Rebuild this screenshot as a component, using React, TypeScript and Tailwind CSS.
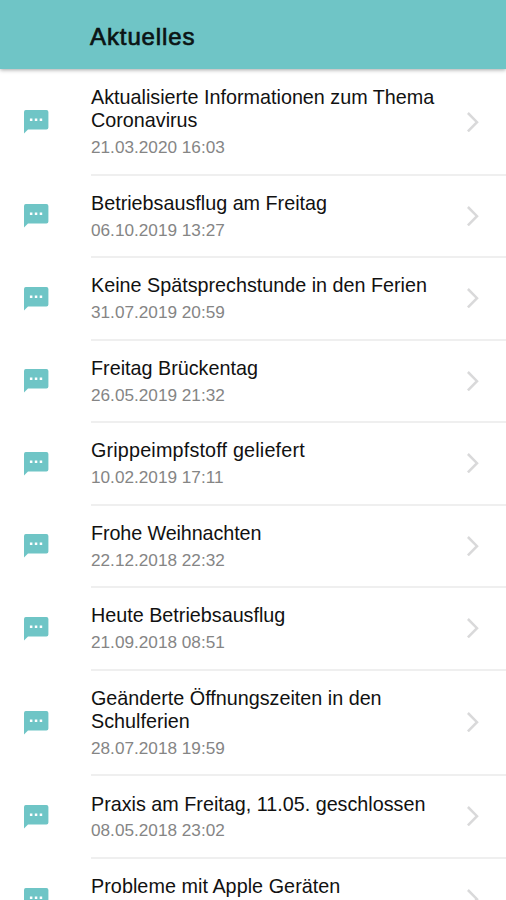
import React from "react";

type Item = { lines: string[]; date?: string; tracking?: string };

const items: Item[] = [
  { lines: ["Aktualisierte Informationen zum Thema", "Coronavirus"], date: "21.03.2020 16:03" },
  { lines: ["Betriebsausflug am Freitag"], date: "06.10.2019 13:27" },
  { lines: ["Keine Spätsprechstunde in den Ferien"], date: "31.07.2019 20:59" },
  { lines: ["Freitag Brückentag"], date: "26.05.2019 21:32" },
  { lines: ["Grippeimpfstoff geliefert"], date: "10.02.2019 17:11", tracking: "tracking-[0.18px]" },
  { lines: ["Frohe Weihnachten"], date: "22.12.2018 22:32", tracking: "tracking-[-0.1px]" },
  { lines: ["Heute Betriebsausflug"], date: "21.09.2018 08:51" },
  { lines: ["Geänderte Öffnungszeiten in den", "Schulferien"], date: "28.07.2018 19:59" },
  { lines: ["Praxis am Freitag, 11.05. geschlossen"], date: "08.05.2018 23:02" },
  { lines: ["Probleme mit Apple Geräten"], tracking: "tracking-[0.05px]" },
];

function MessageIcon() {
  return (
    <svg className="block h-6 w-[25px]" viewBox="0 0 25 24">
      <path fill="#6fc5c6" d="M1.8 0H22.4A2 2 0 0 1 24.4 2V17.4A2 2 0 0 1 22.4 19.4H4L0 23.4V2A2 2 0 0 1 1.8 0Z" />
      <path fill="#fff" d="M5.9 8.4h2.5v2.5H5.9zM10.8 8.4h2.5v2.5h-2.5zM15.7 8.4h2.5v2.5h-2.5z" />
    </svg>
  );
}

function Row({ item }: { item: Item }) {
  return (
    <li className="flex shrink-0">
      <div className="flex w-[91px] shrink-0 items-center pb-[1.2px] pl-6">
        <MessageIcon />
      </div>
      <div className="flex grow items-center justify-between border-b-2 border-[#efefef] pt-[16.1px] pb-[16.6px]">
        <div className={item.tracking}>
          {item.lines.map((line) => (
            <p key={line} className="h-[23.3px] whitespace-nowrap text-[19.75px] leading-[23.3px] text-[#111]">{line}</p>
          ))}
          <p className="mt-[4.5px] h-5 text-[17.2px] leading-5 tracking-normal text-[#858585]">{item.date}</p>
        </div>
        <svg className="mr-[27px] h-5 w-3 shrink-0" viewBox="0 0 12 20" fill="none" stroke="#d9d9da" strokeWidth="2.5">
          <path d="M0.9 1 10 10.2 0.9 19.4" />
        </svg>
      </div>
    </li>
  );
}

export default function App() {
  return (
    <main className="flex h-[900px] w-[506px] flex-col overflow-hidden bg-white font-['Liberation_Sans',Arial,sans-serif]">
      <header className="z-10 mb-px flex h-[69px] shrink-0 items-center bg-[#6fc5c6] pt-[4px] pl-[90px] shadow-[0_1px_4px_rgba(0,0,0,0.35)]">
        <h1 className="text-[24px] tracking-[0.9px] text-[#0b1414] [-webkit-text-stroke:0.7px_#0b1414]">Aktuelles</h1>
      </header>
      <ul className="flex flex-col">
        {items.map((item) => <Row key={item.lines[0]} item={item} />)}
      </ul>
    </main>
  );
}
